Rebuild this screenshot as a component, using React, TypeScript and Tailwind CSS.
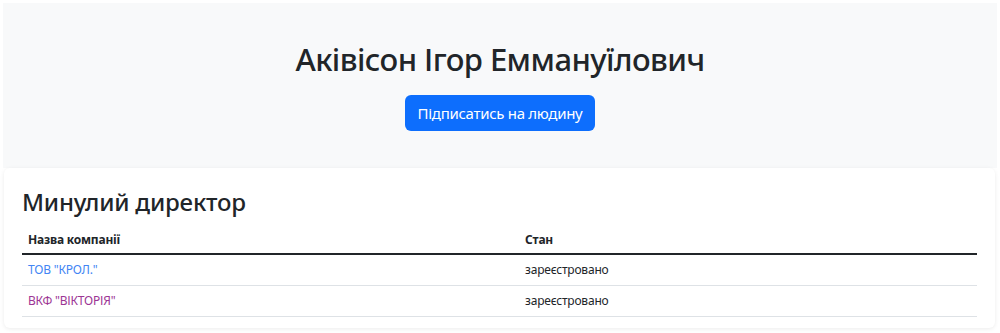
const rows = [
  { name: 'ТОВ "КРОЛ."', state: "зареєстровано", visited: false },
  { name: 'ВКФ "ВІКТОРІЯ"', state: "зареєстровано", visited: true },
];

export default function App() {
  return (
    <div
      className="min-h-[333px] bg-white p-[3px] text-[#212529]"
      style={{ fontFamily: '"Noto Sans", "Open Sans", sans-serif' }}
    >
      <section className="flex h-[165px] flex-col items-center bg-[#f8f9fa] pt-[37px]">
        <h1 className="text-[31px] leading-[38px] font-medium tracking-[-0.55px]">Аківісон Ігор Еммануїлович</h1>
        <button className="mt-[17px] h-[36px] rounded-[6px] bg-[#0d6efd] px-[13px] text-[15px] tracking-[-0.3px] text-white">
          Підписатись на людину
        </button>
      </section>
      <div className="mx-[1px] mr-[2px] rounded-[6px] bg-white px-[18px] pt-[18px] pb-[11px] shadow-[0_1px_4px_rgba(0,0,0,0.08)]">
        <h2 className="text-[24px] leading-[31px] font-medium tracking-[-0.2px]">Минулий директор</h2>
        <table className="mt-[10px] w-full text-[12px] tracking-[-0.2px]">
          <thead>
            <tr className="border-b-2 border-[#212529]">
              <th className="w-[497px] px-[6px] py-[4px] text-left font-bold leading-[18px]">Назва компанії</th>
              <th className="px-[6px] py-[4px] text-left font-bold leading-[18px]">Стан</th>
            </tr>
          </thead>
          <tbody>
            {rows.map((r) => (
              <tr key={r.name} className="border-b border-[#dee2e6]">
                <td className="px-[6px] py-[6px] leading-[18px]">
                  <a href="#" className={r.visited ? "text-[#9c3594]" : "text-[#4285f4]"}>
                    {r.name}
                  </a>
                </td>
                <td className="px-[6px] py-[6px] leading-[18px]">{r.state}</td>
              </tr>
            ))}
          </tbody>
        </table>
      </div>
    </div>
  );
}
